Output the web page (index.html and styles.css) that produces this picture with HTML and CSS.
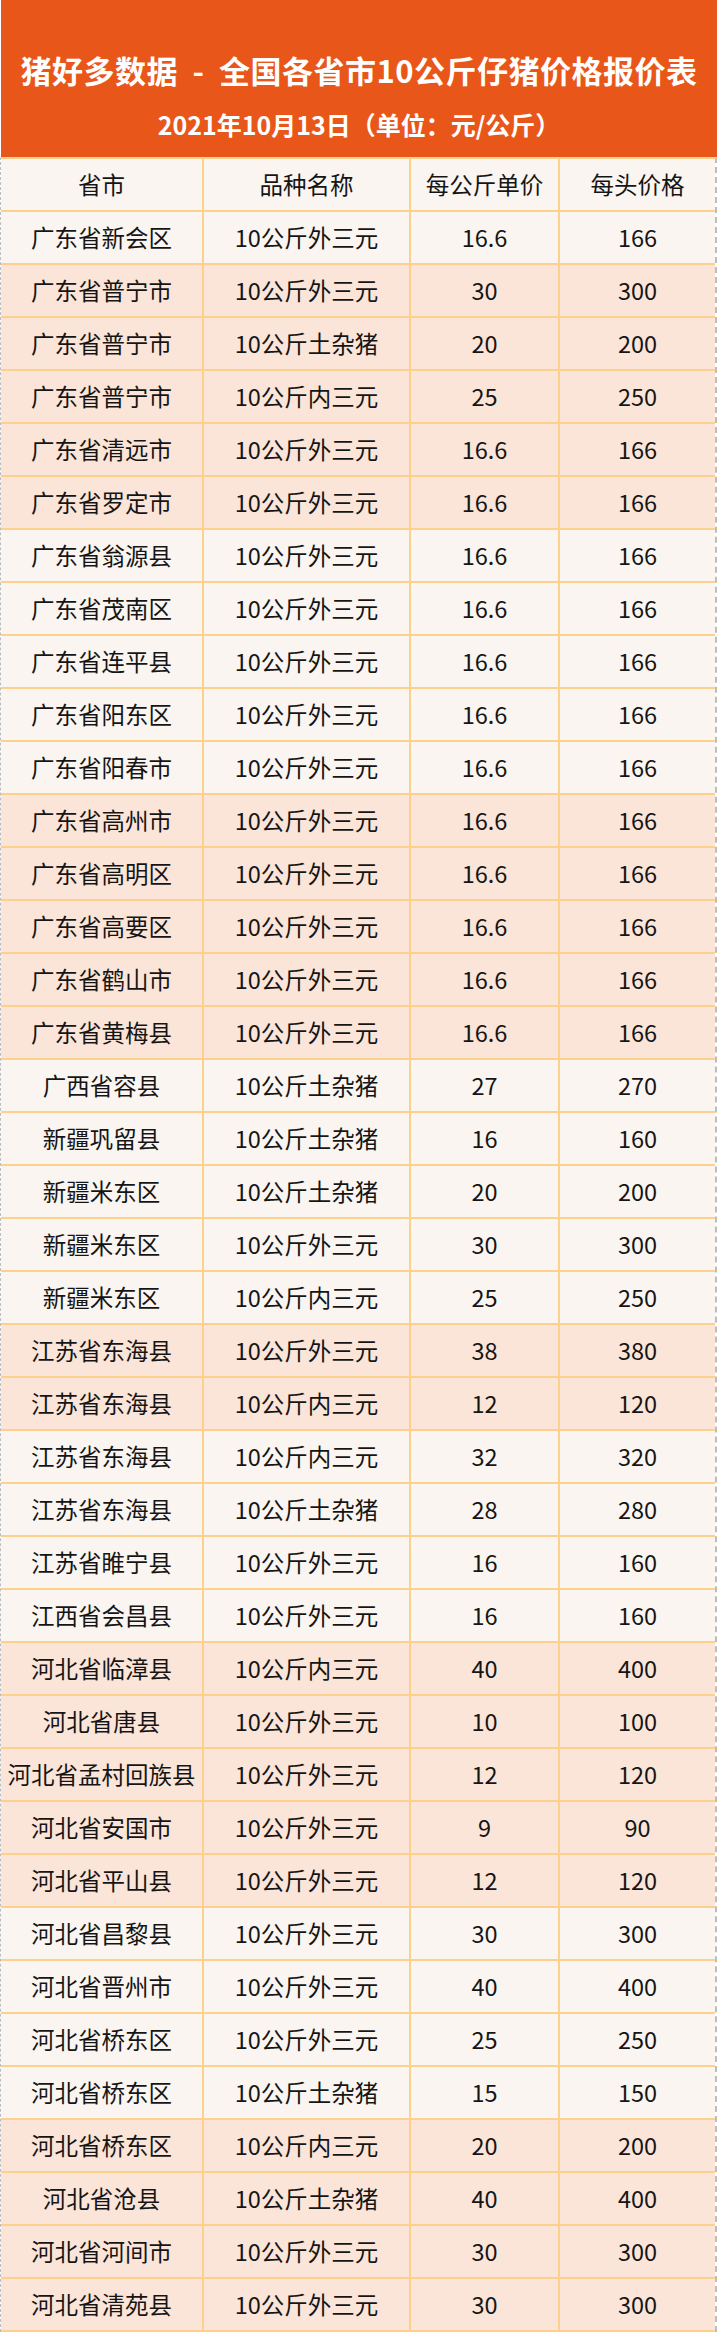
FILE: index.html
```html
<!DOCTYPE html>
<html lang="zh-CN">
<head>
<meta charset="utf-8">
<title>猪好多数据</title>
<link rel="stylesheet" href="styles.css">
</head>
<body>
<div class="sheet">
  <header class="banner">
    <h1 class="title">猪好多数据 - 全国各省市10公斤仔猪价格报价表</h1>
    <p class="date">2021年10月13日（单位：元/公斤）</p>
  </header>
  <div class="table">
    <div class="row head"><div class="cell">省市</div><div class="cell">品种名称</div><div class="cell">每公斤单价</div><div class="cell">每头价格</div></div>
    <div class="row light"><div class="cell">广东省新会区</div><div class="cell">10公斤外三元</div><div class="cell">16.6</div><div class="cell">166</div></div>
    <div class="row pink"><div class="cell">广东省普宁市</div><div class="cell">10公斤外三元</div><div class="cell">30</div><div class="cell">300</div></div>
    <div class="row pink"><div class="cell">广东省普宁市</div><div class="cell">10公斤土杂猪</div><div class="cell">20</div><div class="cell">200</div></div>
    <div class="row pink"><div class="cell">广东省普宁市</div><div class="cell">10公斤内三元</div><div class="cell">25</div><div class="cell">250</div></div>
    <div class="row pink"><div class="cell">广东省清远市</div><div class="cell">10公斤外三元</div><div class="cell">16.6</div><div class="cell">166</div></div>
    <div class="row pink"><div class="cell">广东省罗定市</div><div class="cell">10公斤外三元</div><div class="cell">16.6</div><div class="cell">166</div></div>
    <div class="row light"><div class="cell">广东省翁源县</div><div class="cell">10公斤外三元</div><div class="cell">16.6</div><div class="cell">166</div></div>
    <div class="row light"><div class="cell">广东省茂南区</div><div class="cell">10公斤外三元</div><div class="cell">16.6</div><div class="cell">166</div></div>
    <div class="row light"><div class="cell">广东省连平县</div><div class="cell">10公斤外三元</div><div class="cell">16.6</div><div class="cell">166</div></div>
    <div class="row light"><div class="cell">广东省阳东区</div><div class="cell">10公斤外三元</div><div class="cell">16.6</div><div class="cell">166</div></div>
    <div class="row light"><div class="cell">广东省阳春市</div><div class="cell">10公斤外三元</div><div class="cell">16.6</div><div class="cell">166</div></div>
    <div class="row pink"><div class="cell">广东省高州市</div><div class="cell">10公斤外三元</div><div class="cell">16.6</div><div class="cell">166</div></div>
    <div class="row pink"><div class="cell">广东省高明区</div><div class="cell">10公斤外三元</div><div class="cell">16.6</div><div class="cell">166</div></div>
    <div class="row pink"><div class="cell">广东省高要区</div><div class="cell">10公斤外三元</div><div class="cell">16.6</div><div class="cell">166</div></div>
    <div class="row pink"><div class="cell">广东省鹤山市</div><div class="cell">10公斤外三元</div><div class="cell">16.6</div><div class="cell">166</div></div>
    <div class="row pink"><div class="cell">广东省黄梅县</div><div class="cell">10公斤外三元</div><div class="cell">16.6</div><div class="cell">166</div></div>
    <div class="row light"><div class="cell">广西省容县</div><div class="cell">10公斤土杂猪</div><div class="cell">27</div><div class="cell">270</div></div>
    <div class="row light"><div class="cell">新疆巩留县</div><div class="cell">10公斤土杂猪</div><div class="cell">16</div><div class="cell">160</div></div>
    <div class="row light"><div class="cell">新疆米东区</div><div class="cell">10公斤土杂猪</div><div class="cell">20</div><div class="cell">200</div></div>
    <div class="row light"><div class="cell">新疆米东区</div><div class="cell">10公斤外三元</div><div class="cell">30</div><div class="cell">300</div></div>
    <div class="row light"><div class="cell">新疆米东区</div><div class="cell">10公斤内三元</div><div class="cell">25</div><div class="cell">250</div></div>
    <div class="row pink"><div class="cell">江苏省东海县</div><div class="cell">10公斤外三元</div><div class="cell">38</div><div class="cell">380</div></div>
    <div class="row pink"><div class="cell">江苏省东海县</div><div class="cell">10公斤内三元</div><div class="cell">12</div><div class="cell">120</div></div>
    <div class="row light"><div class="cell">江苏省东海县</div><div class="cell">10公斤内三元</div><div class="cell">32</div><div class="cell">320</div></div>
    <div class="row light"><div class="cell">江苏省东海县</div><div class="cell">10公斤土杂猪</div><div class="cell">28</div><div class="cell">280</div></div>
    <div class="row light"><div class="cell">江苏省睢宁县</div><div class="cell">10公斤外三元</div><div class="cell">16</div><div class="cell">160</div></div>
    <div class="row light"><div class="cell">江西省会昌县</div><div class="cell">10公斤外三元</div><div class="cell">16</div><div class="cell">160</div></div>
    <div class="row pink"><div class="cell">河北省临漳县</div><div class="cell">10公斤内三元</div><div class="cell">40</div><div class="cell">400</div></div>
    <div class="row pink"><div class="cell">河北省唐县</div><div class="cell">10公斤外三元</div><div class="cell">10</div><div class="cell">100</div></div>
    <div class="row pink"><div class="cell">河北省孟村回族县</div><div class="cell">10公斤外三元</div><div class="cell">12</div><div class="cell">120</div></div>
    <div class="row pink"><div class="cell">河北省安国市</div><div class="cell">10公斤外三元</div><div class="cell">9</div><div class="cell">90</div></div>
    <div class="row pink"><div class="cell">河北省平山县</div><div class="cell">10公斤外三元</div><div class="cell">12</div><div class="cell">120</div></div>
    <div class="row light"><div class="cell">河北省昌黎县</div><div class="cell">10公斤外三元</div><div class="cell">30</div><div class="cell">300</div></div>
    <div class="row light"><div class="cell">河北省晋州市</div><div class="cell">10公斤外三元</div><div class="cell">40</div><div class="cell">400</div></div>
    <div class="row light"><div class="cell">河北省桥东区</div><div class="cell">10公斤外三元</div><div class="cell">25</div><div class="cell">250</div></div>
    <div class="row light"><div class="cell">河北省桥东区</div><div class="cell">10公斤土杂猪</div><div class="cell">15</div><div class="cell">150</div></div>
    <div class="row pink"><div class="cell">河北省桥东区</div><div class="cell">10公斤内三元</div><div class="cell">20</div><div class="cell">200</div></div>
    <div class="row pink"><div class="cell">河北省沧县</div><div class="cell">10公斤土杂猪</div><div class="cell">40</div><div class="cell">400</div></div>
    <div class="row pink"><div class="cell">河北省河间市</div><div class="cell">10公斤外三元</div><div class="cell">30</div><div class="cell">300</div></div>
    <div class="row pink"><div class="cell">河北省清苑县</div><div class="cell">10公斤外三元</div><div class="cell">30</div><div class="cell">300</div></div>
  </div>
</div>
</body>
</html>
```

FILE: styles.css
```css
html, body {
  margin: 0;
  padding: 0;
  background: #ffffff;
}

body {
  font-family: "Noto Sans CJK SC", "Noto Sans", sans-serif;
  color: #151515;
}

.sheet {
  width: 717px;
}

.banner {
  box-sizing: border-box;
  height: 157px;
  margin-left: 1px;
  padding-top: 54px;
  background: #e9561a;
  color: #ffffff;
  text-align: center;
}

.title {
  margin: 0;
  font-size: 31px;
  line-height: 31px;
  font-weight: 700;
  word-spacing: 7px;
  letter-spacing: 0.5px;
  white-space: nowrap;
}

.date {
  margin: 27px 0 0;
  font-size: 25px;
  line-height: 25px;
  font-weight: 700;
  white-space: nowrap;
}

.table {
  width: 714px;
  border-left: 1px dashed #bdbdbd;
  border-right: 2px dashed #bdbdbd;
  border-top: 2px solid #fdd08e;
}

.row {
  display: grid;
  grid-template-columns: 203px 207px 149px 155px;
  box-sizing: border-box;
  height: 53px;
  border-bottom: 2px solid #fdd08e;
}

.row.head,
.row.light {
  background: #faf5f1;
}

.row.pink {
  background: #fbe4d8;
}

.cell {
  display: flex;
  align-items: center;
  justify-content: center;
  padding-top: 1px;
  font-size: 23.5px;
  line-height: 1;
  white-space: nowrap;
  border-right: 2px solid #fdd08e;
}

.cell:last-child {
  border-right: none;
}
```
